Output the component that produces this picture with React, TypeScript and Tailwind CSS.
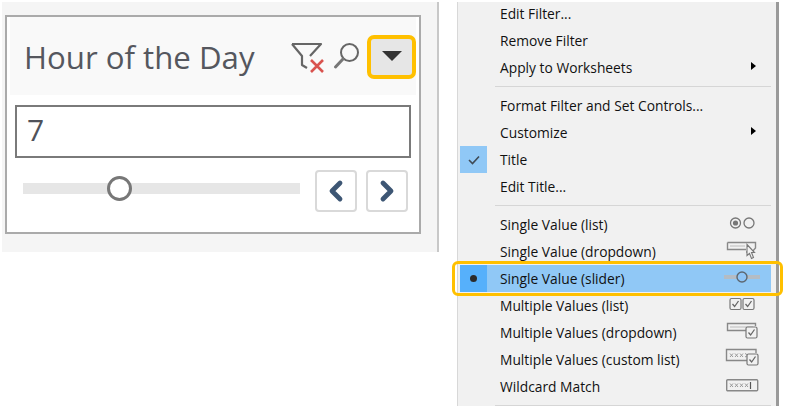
import { ChevronLeft, ChevronRight } from 'lucide-react';
import type { ReactNode } from 'react';

function FilterClearIcon() {
  return (
    <svg width="36" height="32" viewBox="0 0 36 32" fill="none">
      <path d="M2 3H31L20 15M2 3L12 15V24L17 27" stroke="#666" strokeWidth="2.2" strokeLinejoin="round" />
      <path d="M21 19L33 31M33 19L21 31" stroke="#d9534f" strokeWidth="2.6" />
    </svg>
  );
}

function SearchIcon() {
  return (
    <svg width="28" height="28" viewBox="0 0 28 28" fill="none">
      <circle cx="16.5" cy="10.5" r="8.5" stroke="#666" strokeWidth="2" />
      <path d="M10 17L2.5 25" stroke="#777" strokeWidth="3" strokeLinecap="round" />
    </svg>
  );
}

function RadioPair() {
  return (
    <svg width="26" height="14" viewBox="0 0 26 14" fill="none">
      <circle cx="6.5" cy="7" r="5" stroke="#777" strokeWidth="1.3" />
      <circle cx="6.5" cy="7" r="2.6" fill="#777" />
      <circle cx="20" cy="7" r="5" stroke="#777" strokeWidth="1.3" />
    </svg>
  );
}

function DropdownPointer() {
  return (
    <svg width="32" height="20" viewBox="0 0 32 20" fill="none">
      <path d="M1.5 2.5H29.5V8L26 12H20M1.5 2.5V9.5H20" stroke="#888" strokeWidth="1.4" />
      <path d="M4 6H19" stroke="#c8c8c8" strokeWidth="1.3" />
      <path d="M21 4.5V15.5L23.5 13.5L25.5 18.5L27.5 17.5L25.5 12.5H28.5Z" fill="#f3f3f3" stroke="#777" strokeWidth="1.1" />
    </svg>
  );
}

function SliderGlyph() {
  return (
    <svg width="36" height="14" viewBox="0 0 36 14" fill="none">
      <rect x="0" y="5" width="36" height="4" fill="#b4bcc4" />
      <circle cx="18" cy="7" r="5" fill="#8fc5f6" stroke="#5d6770" strokeWidth="1.4" />
    </svg>
  );
}

function Box({ x, y, size = 11 }: { x: number; y: number; size?: number }) {
  return (
    <g>
      <rect x={x} y={y} width={size} height={size} rx="1.5" fill="#f1f1f1" stroke="#777" strokeWidth="1.2" />
      <path d={`M${x + 2.5} ${y + size / 2}L${x + size * 0.42} ${y + size - 3}L${x + size - 2.5} ${y + 2.5}`} stroke="#666" strokeWidth="1.3" />
    </g>
  );
}

function CheckPair() {
  return (
    <svg width="26" height="14" viewBox="0 0 26 14" fill="none">
      <Box x={1} y={1.5} />
      <Box x={14} y={1.5} />
    </svg>
  );
}

function DropdownCheck() {
  return (
    <svg width="32" height="18" viewBox="0 0 32 18" fill="none">
      <path d="M20 8.5H1.5V1.5H29.5V4" stroke="#888" strokeWidth="1.4" />
      <path d="M4 5H27" stroke="#c8c8c8" strokeWidth="1.3" />
      <Box x={20} y={5} size={11} />
    </svg>
  );
}

function CustomListCheck() {
  return (
    <svg width="34" height="20" viewBox="0 0 34 20" fill="none">
      <path d="M22 12.5H1.5V1.5H31V5" stroke="#888" strokeWidth="1.4" />
      <path d="M5 5.5L8 9M8 5.5L5 9M10 5.5L13 9M13 5.5L10 9M15 5.5L18 9M18 5.5L15 9M20 5.5L23 7.2L20 9" stroke="#999" strokeWidth="1" />
      <Box x={22} y={6} size={11} />
    </svg>
  );
}

function WildcardGlyph() {
  return (
    <svg width="33" height="13" viewBox="0 0 33 13" fill="none">
      <rect x="0.7" y="0.7" width="31" height="11" rx="1" stroke="#888" strokeWidth="1.4" />
      <path d="M4 4.5L7 8M7 4.5L4 8M9 4.5L12 8M12 4.5L9 8M14 4.5L17 8M17 4.5L14 8M19 4.5L22 8M22 4.5L19 8" stroke="#999" strokeWidth="1" />
      <path d="M24.5 3V10" stroke="#555" strokeWidth="1.2" />
    </svg>
  );
}

function Row({
  label,
  gutter,
  right,
  selected,
}: {
  label: string;
  gutter?: ReactNode;
  right?: ReactNode;
  selected?: boolean;
}) {
  return (
    <div className={`relative flex h-[27px] items-center ${selected ? 'bg-[#90c8f6]' : ''}`}>
      <div
        className={`flex h-[27px] w-[27px] shrink-0 items-center justify-center ${
          gutter ? (selected ? 'bg-[#56b0fb]' : 'bg-[#90c8f6]') : ''
        }`}
      >
        {gutter}
      </div>
      <span className="ml-[13px] flex-1 whitespace-nowrap text-[#111111]">{label}</span>
      <div className="mb-[3px] mr-[9px] flex w-[40px] items-center justify-center">{right}</div>
      {selected && (
        <div className="absolute -left-[8px] -right-[12px] -top-[4px] -bottom-[4px] rounded-[6px] border-[3px] border-[#ffc000]" />
      )}
    </div>
  );
}

function Separator() {
  return (
    <div className="flex h-[11px] items-center pl-[35px]">
      <div className="h-px w-full bg-[#d6d6d6]" />
    </div>
  );
}

const arrow = <div className="mr-[-23px] h-0 w-0 border-y-[4px] border-l-[5px] border-y-transparent border-l-black" />;

export default function App() {
  return (
    <div className="flex h-[406px] w-[791px] overflow-hidden bg-white font-['Open_Sans',sans-serif]">
      {/* Filter card */}
      <div className="ml-[2px] mt-[2px] h-[250px] w-[437px] border-r-2 border-[#c8c8c8] bg-[#f5f5f5] pl-[3px] pt-[13px]">
        <div className="h-[219px] w-[416px] border-2 border-[#aaaaaa] bg-white px-[3px]">
          <div className="flex h-[78px] items-center bg-[#f9f9f9] pl-[14px]">
            <span className="mt-[4px] flex-1 whitespace-nowrap text-[31.2px] leading-none text-[#55575e]">Hour of the Day</span>
            <div className="mr-[6px] flex items-center">
              <div className="mr-[7px] mt-[2px]"><FilterClearIcon /></div>
              <SearchIcon />
            </div>
            <div className="mt-[2px] flex h-[44px] w-[49px] items-center justify-center rounded-[7px] border-[4px] border-[#ffc000] bg-[#e6e6e6]">
              <div className="mb-[3px] h-0 w-0 border-x-[10px] border-t-[10px] border-x-transparent border-t-[#333]" />
            </div>
          </div>
          <div className="ml-[5px] mt-[10px] flex h-[53px] w-[396px] items-center border-2 border-[#7a7a7a] pb-[4px] pl-[10px] text-[30px] leading-none text-[#50525a]">
            7
          </div>
          <div className="mt-[12px] flex items-center pl-[13px]">
            <div className="relative -mt-[5px] h-[11px] w-[277px] bg-[#e6e6e6]">
              <div className="absolute left-[84px] top-[-7px] h-[25px] w-[25px] rounded-full border-[3px] border-[#777] bg-white" />
            </div>
            <div className="ml-[15px] flex h-[42px] w-[42px] items-center justify-center rounded-[4px] border-2 border-[#d9d9d9] bg-white">
              <ChevronLeft size={32} strokeWidth={3.6} color="#3d5674" />
            </div>
            <div className="ml-[9px] flex h-[42px] w-[42px] items-center justify-center rounded-[4px] border-2 border-[#d9d9d9] bg-white">
              <ChevronRight size={32} strokeWidth={3.6} color="#3d5674" />
            </div>
          </div>
        </div>
      </div>

      {/* Context menu */}
      <div className="ml-[18px] mt-[2px] h-[404px] w-[322px] border-r-[3px] border-l border-[#9a9a9a] border-l-[#d8d8d8] bg-[#f1f1f1] pl-[2px] pr-[5px] text-[13.8px] leading-none">
        <div className="-mt-[2px]">
          <Row label="Edit Filter..." />
          <Row label="Remove Filter" />
          <Row label="Apply to Worksheets" right={arrow} />
          <Separator />
          <Row label="Format Filter and Set Controls..." />
          <Row label="Customize" right={arrow} />
          <Row
            label="Title"
            gutter={
              <svg width="14" height="12" viewBox="0 0 14 12" fill="none">
                <path d="M2 6L5.5 9.5L12 2.5" stroke="#3f4a55" strokeWidth="1.6" />
              </svg>
            }
          />
          <Row label="Edit Title..." />
          <Separator />
          <Row label="Single Value (list)" right={<RadioPair />} />
          <Row label="Single Value (dropdown)" right={<DropdownPointer />} />
          <Row label="Single Value (slider)" selected gutter={<div className="h-[7px] w-[7px] rounded-full bg-[#2b2b2b]" />} right={<SliderGlyph />} />
          <Row label="Multiple Values (list)" right={<CheckPair />} />
          <Row label="Multiple Values (dropdown)" right={<DropdownCheck />} />
          <Row label="Multiple Values (custom list)" right={<CustomListCheck />} />
          <Row label="Wildcard Match" right={<WildcardGlyph />} />
          <Separator />
        </div>
      </div>
    </div>
  );
}
